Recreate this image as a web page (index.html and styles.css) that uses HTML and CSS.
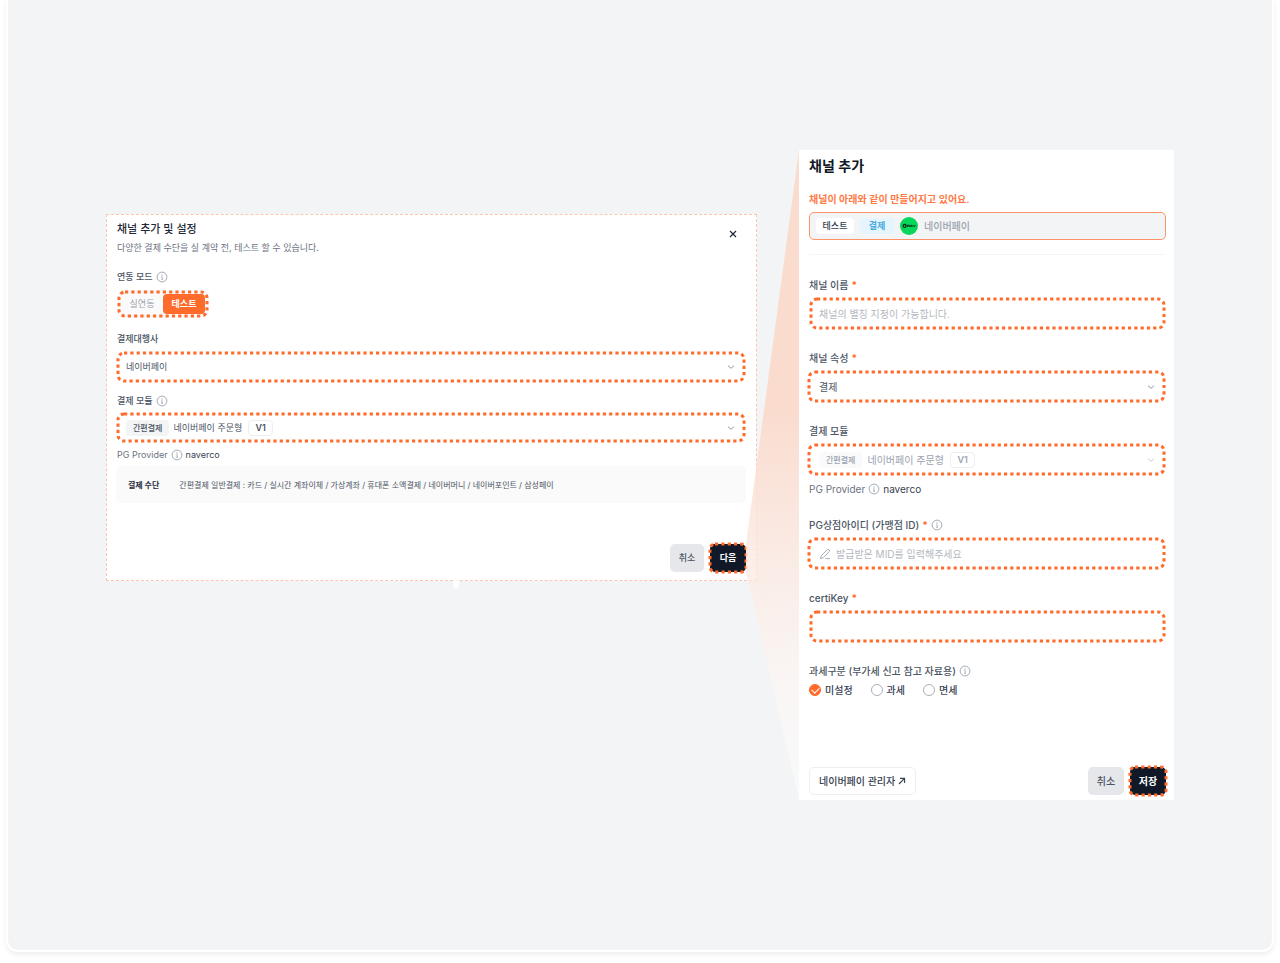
FILE: index.html
```
<!DOCTYPE html>
<html lang="ko">
<head>
  <meta charset="UTF-8" />
  <meta name="viewport" content="width=device-width, initial-scale=1.0"/>
  <title>채널 추가</title>
  <link rel="stylesheet" href="styles.css">
</head>
<body>

  <!-- shared icons -->
  <svg class="defs" width="0" height="0" aria-hidden="true">
    <symbol id="info" viewBox="0 0 12 12">
      <circle cx="6" cy="6" r="4.9" fill="none" stroke="currentColor" stroke-width="0.9"/>
      <path d="M5.4 5.6h.7v2.6M5.2 8.3h1.8" fill="none" stroke="currentColor" stroke-width="0.8"/>
      <circle cx="6" cy="3.9" r="0.6" fill="currentColor"/>
    </symbol>
    <symbol id="chevron" viewBox="0 0 8 8">
      <path d="M1 2.7l3 2.6 3-2.6" fill="none" stroke="currentColor" stroke-width="1"/>
    </symbol>
  </svg>

  <main class="stage">

    <form class="card setup">
      <header class="setup-head">
        <div>
          <h2>채널 추가 및 설정</h2>
          <p>다양한 결제 수단을 실 계약 전, 테스트 할 수 있습니다.</p>
        </div>
        <button type="button" class="close" aria-label="닫기">
          <svg viewBox="0 0 8 8"><path d="M1 1l6 6M7 1L1 7" stroke="currentColor" stroke-width="1.2"/></svg>
        </button>
      </header>

      <div class="group">
        <div class="label">연동 모드 <svg class="info"><use href="#info"/></svg></div>
        <div class="toggle">
          <button type="button">실연동</button>
          <button type="button" class="on">테스트</button>
          <svg class="ring"><rect rx="6" stroke-dasharray="3.2 3.1"/></svg>
        </div>
      </div>

      <div class="group">
        <label class="label" for="pg">결제대행사</label>
        <div class="field">
          <select id="pg" class="grow"><option>네이버페이</option></select>
          <svg class="chevron"><use href="#chevron"/></svg>
          <svg class="ring"><rect rx="6" stroke-dasharray="3.2 3.1"/></svg>
        </div>
      </div>

      <div class="group">
        <label class="label" for="module">결제 모듈 <svg class="info"><use href="#info"/></svg></label>
        <div class="field slim">
          <span class="tag">간편결제</span>
          <select id="module"><option>네이버페이 주문형</option></select>
          <span class="version">V1</span>
          <svg class="chevron"><use href="#chevron"/></svg>
          <svg class="ring"><rect rx="6" stroke-dasharray="3.2 3.1"/></svg>
        </div>
        <p class="provider">PG Provider <svg class="info"><use href="#info"/></svg> <span>naverco</span></p>
      </div>

      <div class="methods">
        <strong>결제 수단</strong>
        <span>간편결제 일반결제 : 카드 / 실시간 계좌이체 / 가상계좌 / 휴대폰 소액결제 / 네이버머니 / 네이버포인트 / 삼성페이</span>
      </div>

      <footer class="actions">
        <button type="button" class="btn btn-cancel">취소</button>
        <button type="button" class="btn btn-main">다음
          <svg class="ring"><rect rx="5" stroke-dasharray="3.2 3.1"/></svg>
        </button>
      </footer>
    </form>

    <svg class="beam" viewBox="0 0 53 650" preserveAspectRatio="none" aria-hidden="true">
      <defs>
        <linearGradient id="fade" x1="0" y1="0" x2="0" y2="1">
          <stop offset="0" stop-color="#fbd9ca" stop-opacity="0.9"/>
          <stop offset="0.4" stop-color="#fbd9ca" stop-opacity="0.9"/>
          <stop offset="0.82" stop-color="#fdf6f3" stop-opacity="0.7"/>
          <stop offset="1" stop-color="#ffffff" stop-opacity="0.5"/>
        </linearGradient>
      </defs>
      <path d="M53 0V650L0 422V394Z" fill="url(#fade)"/>
    </svg>

    <form class="card channel">
      <h1>채널 추가</h1>
      <p class="notice">채널이 아래와 같이 만들어지고 있어요.</p>
      <div class="summary">
        <span class="chip">테스트</span>
        <span class="chip chip-pay">결제</span>
        <svg class="logo" viewBox="0 0 18 18">
          <circle cx="9" cy="9" r="9" fill="#06d65a"/>
          <circle cx="4.6" cy="8.9" r="1.5" fill="none" stroke="#0a2b18" stroke-width="1.2"/>
          <path d="M5.4 6.8v2M7.4 10V8.2h1.8V10M10.7 10V8.4h1.4V10M13.6 8.2l.8 1.6 1-1.6" fill="none" stroke="#0a2b18" stroke-width="1"/>
        </svg>
        <span>네이버페이</span>
      </div>
      <hr>

      <div class="group">
        <label class="label" for="name">채널 이름 <b>*</b></label>
        <div class="field">
          <input type="text" id="name" class="grow" placeholder="채널의 별칭 지정이 가능합니다.">
          <svg class="ring"><rect rx="6" stroke-dasharray="3.2 3.1"/></svg>
        </div>
      </div>

      <div class="group">
        <label class="label" for="kind">채널 속성 <b>*</b></label>
        <div class="field wide">
          <select id="kind" class="grow"><option>결제</option></select>
          <svg class="chevron"><use href="#chevron"/></svg>
          <svg class="ring"><rect rx="6" stroke-dasharray="3.2 3.1"/></svg>
        </div>
      </div>

      <div class="group">
        <label class="label" for="module2">결제 모듈</label>
        <div class="field wide off">
          <span class="tag">간편결제</span>
          <select id="module2" disabled><option>네이버페이 주문형</option></select>
          <span class="version">V1</span>
          <svg class="chevron"><use href="#chevron"/></svg>
          <svg class="ring"><rect rx="6" stroke-dasharray="3.2 3.1"/></svg>
        </div>
        <p class="provider">PG Provider <svg class="info"><use href="#info"/></svg> <span>naverco</span></p>
      </div>

      <div class="group">
        <label class="label" for="mid">PG상점아이디 (가맹점 ID) <b>*</b> <svg class="info"><use href="#info"/></svg></label>
        <div class="field wide">
          <svg class="pen" viewBox="0 0 12 12">
            <path d="M1.5 10.5l.6-2.6L8.3 1.7a1.1 1.1 0 0 1 1.6 0l.3.3a1.1 1.1 0 0 1 0 1.6L4.1 9.8zM6.5 10.6h4.5" fill="none" stroke="currentColor" stroke-width="0.9" stroke-linejoin="round"/>
          </svg>
          <input type="text" id="mid" class="grow" placeholder="발급받은 MID를 입력해주세요">
          <svg class="ring"><rect rx="6" stroke-dasharray="3.2 3.1"/></svg>
        </div>
      </div>

      <div class="group">
        <label class="label" for="cert">certiKey <b>*</b></label>
        <div class="field">
          <input type="text" id="cert" class="grow">
          <svg class="ring"><rect rx="6" stroke-dasharray="3.2 3.1"/></svg>
        </div>
      </div>

      <div class="group">
        <div class="label">과세구분 (부가세 신고 참고 자료용) <svg class="info"><use href="#info"/></svg></div>
        <div class="radios">
          <label><input type="radio" name="tax" checked>미설정</label>
          <label><input type="radio" name="tax">과세</label>
          <label><input type="radio" name="tax">면세</label>
        </div>
      </div>

      <footer class="actions">
        <a class="admin" href="#">네이버페이 관리자
          <svg viewBox="0 0 8 8"><path d="M1 7l5.6-5.6M2 1.4h4.6V6" fill="none" stroke="currentColor" stroke-width="1.1"/></svg>
        </a>
        <button type="button" class="btn btn-cancel">취소</button>
        <button type="button" class="btn btn-main">저장
          <svg class="ring"><rect rx="5" stroke-dasharray="3.2 3.1"/></svg>
        </button>
      </footer>
    </form>

  </main>

</body>
</html>
```
FILE: styles.css
```
* {
  box-sizing: border-box;
}
body {
  margin: 0;
  background: #fff;
  color: #4b5563;
  font-family: Inter, "Noto Sans CJK KR", sans-serif;
  font-size: 10px;
  line-height: 16px;
}
h1, h2, p {
  margin: 0;
}
button, input, select {
  font: inherit;
  color: inherit;
  margin: 0;
  padding: 0;
  border: none;
  background: none;
  outline: none;
}
.defs {
  position: absolute;
}

/* page frame */
.stage {
  display: grid;
  grid-template-columns: 651fr 42fr 375fr;
  align-items: start;
  margin: 0 8px 12px;
  padding: 150px 98px;
  background: #f2f4f6;
  border-radius: 0 0 10px 10px;
  box-shadow: 0 0 0 2px #fff, 0 3px 5px 2px #f0f0f0;
}
.card {
  display: flex;
  flex-direction: column;
  background: #fff;
}
.label, .provider {
  display: flex;
  align-items: center;
  gap: 3px;
  font-weight: 500;
}
.label b {
  color: #ff6b2b;
}
.info {
  width: 12px;
  height: 12px;
  color: #9aa1ac;
}

/* fields */
.field {
  position: relative;
  display: flex;
  align-items: center;
  height: 33px;
  margin-top: 4px;
  padding: 0 11px 0 10px;
  border-radius: 6px;
}
.field select {
  appearance: none;
  opacity: 1;
}
.grow {
  flex: 1;
  min-width: 0;
}
.field input::placeholder {
  color: #b4b8c0;
  opacity: 1;
}
.tag {
  padding: 0 7px;
  margin-right: 4px;
  border-radius: 4px;
  background: #f3f4f6;
  font-size: 8px;
  font-weight: 500;
}
.version {
  padding: 0 6px;
  margin-left: 6px;
  border: 1px solid #eceef0;
  border-radius: 4px;
  font-size: 9px;
  line-height: 14px;
  font-weight: 600;
}
.chevron {
  width: 8px;
  height: 8px;
  margin-left: auto;
  color: #9298a3;
}
.ring {
  position: absolute;
  inset: 0;
  width: 100%;
  height: 100%;
  pointer-events: none;
}
.ring rect {
  x: 2px;
  y: 2px;
  width: calc(100% - 4px);
  height: calc(100% - 4px);
  fill: none;
  stroke: #ff6b2b;
  stroke-width: 3px;
}
.provider {
  font-weight: 400;
  margin-top: 4px;
  color: #6b7280;
}
.provider span {
  color: #374151;
}

/* buttons */
.actions {
  display: flex;
  gap: 6px;
  justify-content: flex-end;
  align-items: center;
  margin-top: auto;
}
.btn {
  position: relative;
  width: 36px;
  height: 28px;
  border-radius: 5px;
  font-weight: 500;
}
.btn-cancel {
  background: #e5e7eb;
}
.btn-main {
  background: #111827;
  color: #fff;
  font-weight: 700;
}
.btn-main .ring {
  inset: -2px;
  width: calc(100% + 4px);
  height: calc(100% + 4px);
}

/* left card */
.setup {
  position: relative;
  height: 367px;
  margin-top: 64px;
  padding: 6px 10px 8px 9px;
  border: 1px dashed #fbc5ae;
  font-size: 9px;
}
.setup::after {
  content: "";
  position: absolute;
  top: 100%;
  left: 346px;
  width: 6px;
  height: 9px;
  border-radius: 3px;
  background: #fff;
}
.setup-head {
  display: flex;
  justify-content: space-between;
  align-items: center;
  margin-bottom: 13px;
  padding: 0 9px 0 1px;
  color: #6b7280;
}
.setup-head h2 {
  margin-bottom: 3px;
  color: #1f2937;
  font-size: 11px;
  font-weight: 500;
}
.close {
  display: flex;
  width: 8px;
  height: 8px;
  margin-bottom: 10px;
  color: #1f2937;
}
.setup .group {
  margin-bottom: 10px;
}
.setup .label, .setup .provider {
  padding-left: 1px;
}
.setup .field {
  height: 32px;
}
.setup .slim {
  height: 31px;
  margin-top: 3px;
}
.toggle {
  position: relative;
  display: flex;
  width: fit-content;
  height: 28px;
  margin: 5px 0 3px 1px;
  padding: 4px;
  border-radius: 7px;
  background: #fafafa;
}
.toggle button {
  width: 42px;
  border-radius: 4px;
  color: #9ca3af;
}
.toggle .on {
  background: #ff6b2b;
  color: #fff;
  font-weight: 700;
}
.methods {
  display: flex;
  align-items: center;
  gap: 20px;
  height: 37px;
  margin-top: -7px;
  padding: 0 12px;
  border-radius: 5px;
  background: #fafafa;
  font-size: 8px;
}
.methods strong {
  color: #1f2937;
}
.setup .btn-cancel {
  width: 34px;
}

.beam {
  z-index: 1;
  justify-self: end;
  width: calc(100% + 11px);
  height: 650px;
}

/* right card */
.channel {
  min-height: 650px;
  padding: 6px 8px 5px 10px;
}
.channel h1 {
  color: #111827;
  font-size: 14px;
  line-height: 20px;
  font-weight: 600;
}
.notice {
  margin-top: 15px;
  color: #ff7a45;
  font-weight: 600;
}
.summary {
  display: flex;
  align-items: center;
  gap: 6px;
  height: 28px;
  margin-top: 5px;
  padding: 0 6px;
  border: 1px solid #ff9468;
  border-radius: 5px;
  background: #f2f4f6;
  color: #9ca3af;
  font-weight: 500;
}
.chip {
  width: 38px;
  border-radius: 4px;
  background: #fff;
  color: #374151;
  font-size: 9px;
  text-align: center;
}
.chip-pay {
  width: 34px;
  background: #e6f4fd;
  color: #48ade0;
  font-weight: 700;
}
.logo {
  width: 18px;
  height: 18px;
}
.channel hr {
  width: 100%;
  margin: 14px 0 22px;
  border: none;
  border-top: 1px solid #f4f5f6;
}
.channel .group {
  margin-bottom: 20px;
}
.channel .provider {
  margin-top: 5px;
}
.channel .wide {
  margin-left: -2px;
  padding-left: 12px;
}
.off {
  color: #9ca3af;
}
.off .tag {
  margin-right: 5px;
  background: #f9fafb;
}
.off .chevron {
  color: #ccd0d6;
}
.pen {
  width: 12px;
  height: 12px;
  margin-right: 5px;
  color: #9ca3af;
}
.radios {
  display: flex;
  gap: 18px;
  margin-top: 3px;
}
.radios label {
  display: flex;
  align-items: center;
  gap: 4px;
  color: #374151;
  font-weight: 500;
}
.radios input {
  appearance: none;
  position: relative;
  width: 12px;
  height: 12px;
  border: 1px solid #a9afb9;
  border-radius: 50%;
}
.radios input:checked {
  border-color: #ff6b2b;
  background: #ff6b2b;
}
.radios input:checked::after {
  content: "";
  position: absolute;
  left: 3px;
  top: 1px;
  width: 4px;
  height: 6px;
  border: solid #fff;
  border-width: 0 1px 1px 0;
  transform: rotate(45deg);
}
.admin {
  display: flex;
  align-items: center;
  gap: 3px;
  height: 28px;
  margin-right: auto;
  padding: 0 9px;
  border: 1px solid #eceef0;
  border-radius: 5px;
  color: #374151;
  font-weight: 500;
  text-decoration: none;
}
.admin svg {
  width: 8px;
  height: 8px;
}
```
